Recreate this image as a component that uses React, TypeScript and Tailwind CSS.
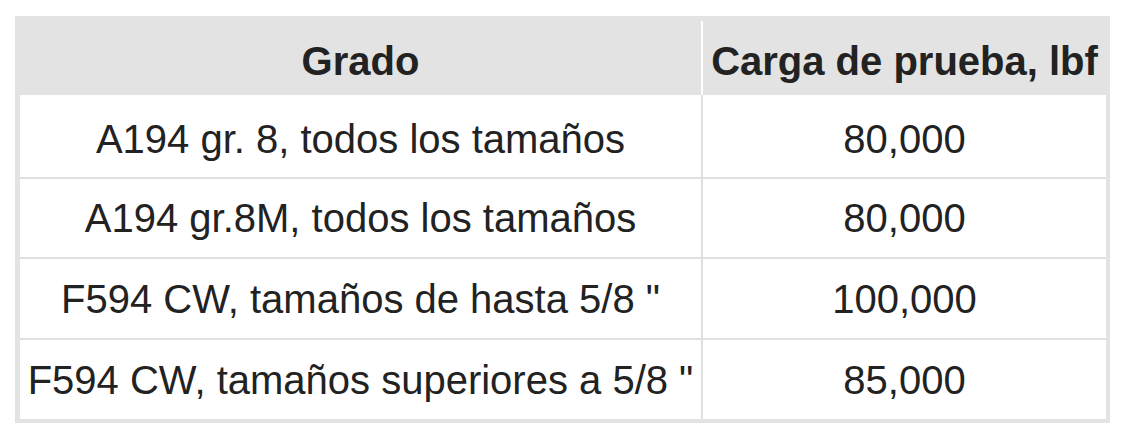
import React from 'react';

type Row = { grado: string; carga: string; h: string };

const rows: Row[] = [
  { grado: 'A194 gr. 8, todos los tamaños', carga: '80,000', h: 'h-[82px] pt-[5px]' },
  { grado: 'A194 gr.8M, todos los tamaños', carga: '80,000', h: 'h-[78px]' },
  { grado: 'F594 CW, tamaños de hasta 5/8 "', carga: '100,000', h: 'h-[79px]' },
  { grado: 'F594 CW, tamaños superiores a 5/8 "', carga: '85,000', h: 'h-[79px]' },
];

const App: React.FC = () => {
  return (
    <div className="w-[1124px] h-[438px] bg-white pl-[15px] pt-[16px] font-['Liberation_Sans',Arial,sans-serif] text-[40px] leading-[46px] text-[#222]">
      <div className="w-[1095px] bg-[#e3e3e3] pl-[5px] pt-[5px] pr-[4px] pb-[4px]">
        {/* header */}
        <div className="flex h-[74px] font-bold">
          <div className="w-[681px] flex items-center justify-center pt-[5px]">Grado</div>
          <div className="w-[2px] bg-white" />
          <div className="w-[403px] flex items-center justify-center pt-[5px]">Carga de prueba, lbf</div>
        </div>
        {/* body */}
        <div className="flex flex-col gap-[2px] bg-[#e0e0e0]">
          {rows.map((r) => (
            <div key={r.grado} className="flex gap-[2px]">
              <div className={`w-[681px] bg-white flex items-center justify-center whitespace-nowrap ${r.h}`}>{r.grado}</div>
              <div className={`w-[403px] bg-white flex items-center justify-center ${r.h}`}>{r.carga}</div>
            </div>
          ))}
        </div>
      </div>
    </div>
  );
};

export default App;
